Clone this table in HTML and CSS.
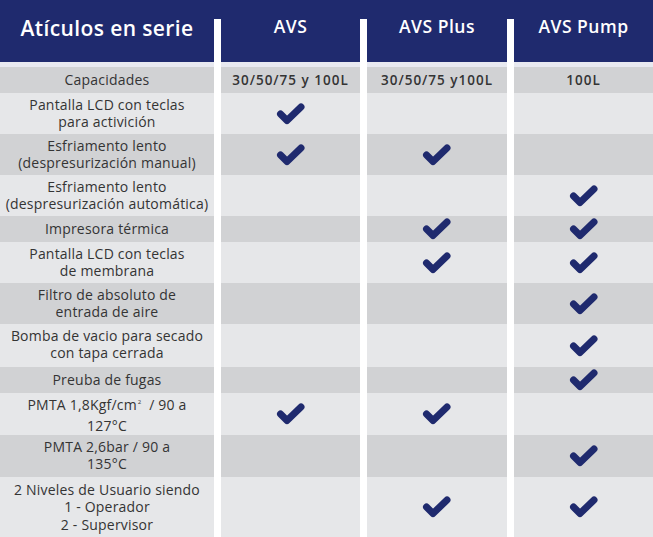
FILE: index.html
```html
<!DOCTYPE html>
<html lang="es">
<head>
<meta charset="utf-8">
<title>Atículos en serie</title>
<link rel="stylesheet" href="styles.css">
</head>
<body>
<div class="table">
  <div class="head">
    <div class="hcell main">Atículos en serie</div>
    <div class="hcell">AVS</div>
    <div class="hcell">AVS Plus</div>
    <div class="hcell">AVS Pump</div>
  </div>

  <div class="row dark h1">
    <div class="cell label">Capacidades</div>
    <div class="cell val">30/50/75 y 100L</div>
    <div class="cell val">30/50/75 y100L</div>
    <div class="cell val">100L</div>
  </div>

  <div class="row light h2">
    <div class="cell label">Pantalla LCD con teclas<br>para activición</div>
    <div class="cell"><svg class="check" viewBox="0 0 30 24"><polyline points="4.5,12 11,18.5 25,5"/></svg></div>
    <div class="cell"></div>
    <div class="cell"></div>
  </div>

  <div class="row dark h2">
    <div class="cell label">Esfriamento lento<br>(despresurización manual)</div>
    <div class="cell"><svg class="check" viewBox="0 0 30 24"><polyline points="4.5,12 11,18.5 25,5"/></svg></div>
    <div class="cell"><svg class="check" viewBox="0 0 30 24"><polyline points="4.5,12 11,18.5 25,5"/></svg></div>
    <div class="cell"></div>
  </div>

  <div class="row light h2">
    <div class="cell label">Esfriamento lento<br>(despresurización automática)</div>
    <div class="cell"></div>
    <div class="cell"></div>
    <div class="cell"><svg class="check" viewBox="0 0 30 24"><polyline points="4.5,12 11,18.5 25,5"/></svg></div>
  </div>

  <div class="row dark h1">
    <div class="cell label">Impresora térmica</div>
    <div class="cell"></div>
    <div class="cell"><svg class="check" viewBox="0 0 30 24"><polyline points="4.5,12 11,18.5 25,5"/></svg></div>
    <div class="cell"><svg class="check" viewBox="0 0 30 24"><polyline points="4.5,12 11,18.5 25,5"/></svg></div>
  </div>

  <div class="row light h2">
    <div class="cell label">Pantalla LCD con teclas<br>de membrana</div>
    <div class="cell"></div>
    <div class="cell"><svg class="check" viewBox="0 0 30 24"><polyline points="4.5,12 11,18.5 25,5"/></svg></div>
    <div class="cell"><svg class="check" viewBox="0 0 30 24"><polyline points="4.5,12 11,18.5 25,5"/></svg></div>
  </div>

  <div class="row dark h2">
    <div class="cell label">Filtro de absoluto de<br>entrada de aire</div>
    <div class="cell"></div>
    <div class="cell"></div>
    <div class="cell"><svg class="check" viewBox="0 0 30 24"><polyline points="4.5,12 11,18.5 25,5"/></svg></div>
  </div>

  <div class="row light h2b">
    <div class="cell label">Bomba de vacio para secado<br>con tapa cerrada</div>
    <div class="cell"></div>
    <div class="cell"></div>
    <div class="cell"><svg class="check" viewBox="0 0 30 24"><polyline points="4.5,12 11,18.5 25,5"/></svg></div>
  </div>

  <div class="row dark h1">
    <div class="cell label">Preuba de fugas</div>
    <div class="cell"></div>
    <div class="cell"></div>
    <div class="cell"><svg class="check" viewBox="0 0 30 24"><polyline points="4.5,12 11,18.5 25,5"/></svg></div>
  </div>

  <div class="row light h2c">
    <div class="cell label">PMTA 1,8Kgf/cm<span class="sq">2</span>&nbsp; / 90 a<br>127°C</div>
    <div class="cell"><svg class="check" viewBox="0 0 30 24"><polyline points="4.5,12 11,18.5 25,5"/></svg></div>
    <div class="cell"><svg class="check" viewBox="0 0 30 24"><polyline points="4.5,12 11,18.5 25,5"/></svg></div>
    <div class="cell"></div>
  </div>

  <div class="row dark h2c">
    <div class="cell label">PMTA 2,6bar / 90 a<br>135°C</div>
    <div class="cell"></div>
    <div class="cell"></div>
    <div class="cell"><svg class="check" viewBox="0 0 30 24"><polyline points="4.5,12 11,18.5 25,5"/></svg></div>
  </div>

  <div class="row light h3">
    <div class="cell label">2 Niveles de Usuario siendo<br>1 - Operador<br>2 - Supervisor</div>
    <div class="cell"></div>
    <div class="cell"><svg class="check" viewBox="0 0 30 24"><polyline points="4.5,12 11,18.5 25,5"/></svg></div>
    <div class="cell"><svg class="check" viewBox="0 0 30 24"><polyline points="4.5,12 11,18.5 25,5"/></svg></div>
  </div>
</div>
</body>
</html>
```

FILE: styles.css
```css
html, body {
  margin: 0;
  padding: 0;
  background: #ffffff;
}

body {
  font-family: "Open Sans", Lato, sans-serif;
  color: #343434;
  width: 653px;
  overflow: hidden;
}

.table {
  width: 653px;
}

.head,
.row {
  display: grid;
  grid-template-columns: 214px 139px 140px 139px;
  column-gap: 7px;
}

.head {
  height: 67px;
  background: linear-gradient(#1f2a6e 0, #1f2a6e 19px, #ffffff 19px);
}

.hcell {
  background: #1f2a6e;
  border-bottom: 5px solid #e8e9f0;
  color: #ffffff;
  font-weight: 600;
  font-size: 17.5px;
  letter-spacing: 0.5px;
  line-height: 1.2;
  text-align: center;
  padding-top: 15.5px;
}

.hcell.main {
  font-size: 21px;
  letter-spacing: 0.4px;
  padding-top: 15.5px;
}

.cell {
  display: flex;
  align-items: center;
  justify-content: center;
  text-align: center;
}

.row.dark .cell {
  background: #d1d2d4;
}

.row.light .cell {
  background: #e6e7e9;
}

.h1 { height: 26px; }
.h2 { height: 41px; }
.h2b { height: 43px; }
.h2c { height: 42px; }
.h3 { height: 60px; }

.label {
  display: block;
  padding-top: 3px;
  font-size: 14px;
  letter-spacing: 0.2px;
  line-height: 17.3px;
}

.h1 .label {
  padding-top: 4px;
}

.h3 .label {
  padding-top: 4px;
}

.label .sq {
  font-size: 6px;
  position: relative;
  top: -6px;
  margin-left: 1px;
}

.val {
  font-size: 13.5px;
  font-weight: 600;
  letter-spacing: 1px;
}

.check {
  width: 30px;
  height: 24px;
  display: block;
}

.check polyline {
  fill: none;
  stroke: #1f2a6e;
  stroke-width: 7;
  stroke-linecap: round;
  stroke-linejoin: round;
}
```
